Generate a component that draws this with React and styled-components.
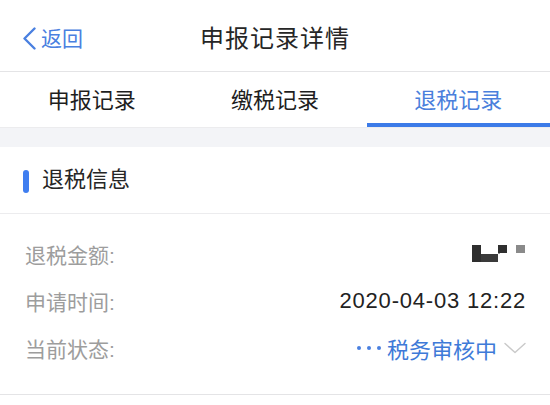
import React from "react";
import styled, { createGlobalStyle } from "styled-components";

const GlobalStyle = createGlobalStyle`
  html, body {
    margin: 0;
    padding: 0;
    background: #ffffff;
  }
  body {
    font-family: "Liberation Sans", "Noto Sans CJK SC", sans-serif;
    color: #222222;
  }
`;

const tabs = ["申报记录", "缴税记录", "退税记录"];

const BackIcon = () => (
  <svg width="15" height="23" viewBox="0 0 15 23">
    <path
      d="M12.5 1.5 L2.5 11.5 L12.5 21.5"
      fill="none"
      stroke="#4a80e0"
      strokeWidth="2.4"
      strokeLinecap="round"
      strokeLinejoin="round"
    />
  </svg>
);

const ChevronDown = () => (
  <svg width="22" height="12" viewBox="0 0 22 12">
    <path
      d="M1 1.5 L11 10.5 L21 1.5"
      fill="none"
      stroke="#c9c9c9"
      strokeWidth="1.4"
      strokeLinecap="round"
      strokeLinejoin="round"
    />
  </svg>
);

// pixelated mosaic that hides the amount
const Mosaic = () => (
  <svg width="54" height="17" viewBox="0 0 54 17">
    <rect x="0" y="0" width="9" height="17" fill="#2e2e2e" />
    <rect x="9" y="9" width="17" height="8" fill="#3a3a3a" />
    <rect x="26" y="0" width="9" height="8" fill="#2f2f2f" />
    <rect x="26" y="8" width="2" height="1" fill="#9a9a9a" />
    <rect x="44" y="0" width="9" height="8" fill="#8a8a8a" />
  </svg>
);

const App = () => {
  return (
    <>
      <GlobalStyle />
      <Page>
        <NavBar>
          <Back>
            <BackIcon />
            <BackText>返回</BackText>
          </Back>
          <Title>申报记录详情</Title>
          <span />
        </NavBar>

        <TabBar>
          {tabs.map((t, i) => (
            <Tab key={t} $active={i === 2}>
              {t}
            </Tab>
          ))}
          <Indicator />
        </TabBar>

        <Gap />

        <SectionHeader>
          <Mark />
          <SectionTitle>退税信息</SectionTitle>
        </SectionHeader>

        <Rows>
          <Row>
            <Label>退税金额:</Label>
            <Value>
              <Mosaic />
            </Value>
          </Row>
          <Row>
            <Label>申请时间:</Label>
            <Value>2020-04-03 12:22</Value>
          </Row>
          <Row>
            <Label>当前状态:</Label>
            <Status>
              <Dots>
                <Dot />
                <Dot />
                <Dot />
              </Dots>
              <StatusText>税务审核中</StatusText>
              <ChevronDown />
            </Status>
          </Row>
        </Rows>
      </Page>
    </>
  );
};

export default App;

const Page = styled.div`
  width: 550px;
  height: 405px;
  overflow: hidden;
  background: #ffffff;
`;

const NavBar = styled.div`
  height: 71px;
  border-bottom: 1px solid #e4e4e6;
  display: grid;
  grid-template-columns: 1fr auto 1fr;
  align-items: center;
  padding: 0 22px;
`;

const Back = styled.div`
  display: flex;
  align-items: center;
  gap: 4px;
  margin-top: 6px;
`;

const BackText = styled.span`
  font-size: 21px;
  line-height: 24px;
  color: #4a80e0;
`;

const Title = styled.div`
  font-size: 24px;
  letter-spacing: 1px;
  line-height: 28px;
  color: #262626;
  margin-top: 6px;
`;

const TabBar = styled.div`
  position: relative;
  height: 56px;
  display: grid;
  grid-template-columns: repeat(3, 1fr);
  border-bottom: 1px solid #ececee;
  box-sizing: border-box;
`;

const Tab = styled.div`
  display: flex;
  align-items: center;
  justify-content: center;
  padding-bottom: 4px;
  font-size: 22px;
  color: ${(p) => (p.$active ? "#4a7fdc" : "#1e1e1e")};
`;

const Indicator = styled.div`
  position: absolute;
  left: 367px;
  right: 0;
  bottom: 0;
  height: 4px;
  background: #3c7be8;
`;

const Gap = styled.div`
  height: 19px;
  background: #f3f4f7;
`;

const SectionHeader = styled.div`
  height: 66px;
  border-bottom: 1px solid #ececee;
  display: flex;
  align-items: center;
  gap: 13px;
  padding-left: 23px;
`;

const Mark = styled.div`
  width: 6px;
  height: 23px;
  border-radius: 3px;
  background: #3f7ef0;
  margin-top: 3px;
`;

const SectionTitle = styled.div`
  font-size: 22px;
  line-height: 26px;
  color: #262626;
`;

const Rows = styled.div`
  padding: 16px 24px 23px 25px;
  border-bottom: 1px solid #e4e4e6;
`;

const Row = styled.div`
  height: 47px;
  display: flex;
  align-items: center;
  justify-content: space-between;
`;

const Label = styled.div`
  font-size: 21px;
  color: #9d9d9d;
`;

const Value = styled.div`
  display: flex;
  align-items: center;
  font-size: 22px;
  letter-spacing: 0.8px;
  color: #222222;
`;

const Status = styled.div`
  display: flex;
  align-items: center;
  gap: 5px;
`;

const Dots = styled.div`
  display: flex;
  gap: 6px;
  margin-right: 1px;
`;

const Dot = styled.span`
  width: 4px;
  height: 4px;
  border-radius: 50%;
  background: #4a80e0;
`;

const StatusText = styled.span`
  font-size: 22px;
  color: #3e7ad8;
  margin-right: 2px;
`;
